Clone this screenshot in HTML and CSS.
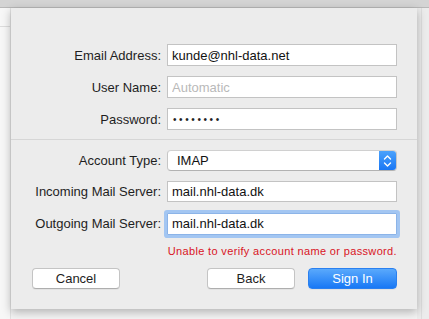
FILE: index.html
```html
<!DOCTYPE html>
<html lang="en">
<head>
    <meta charset="UTF-8">
    <meta name="viewport" content="width=device-width, initial-scale=1.0">
    <title>Add Mail Account</title>
    <link rel="stylesheet" href="styles.css">
</head>
<body>
    <div class="window">
        <div class="titlebar"></div>
        <div class="content">
            <div class="sidebar"><div class="sidebar-line"></div></div>
            <div class="sheet">
                <form class="account-form">
                    <div class="section section-top">
                        <label class="label" for="email">Email Address:</label>
                        <input class="field" type="text" id="email" value="kunde@nhl-data.net">
                        <label class="label" for="user">User Name:</label>
                        <input class="field" type="text" id="user" placeholder="Automatic">
                        <label class="label" for="password">Password:</label>
                        <div class="field password" id="password">&bull;&bull;&bull;&bull;&bull;&bull;&bull;&bull;</div>
                    </div>
                    <div class="divider"></div>
                    <div class="section section-server">
                        <span class="label">Account Type:</span>
                        <div class="popup">
                            <span class="popup-value">IMAP</span>
                            <span class="stepper">
                                <svg width="9" height="14" viewBox="0 0 9 14">
                                    <path d="M1.5 5 L4.5 2 L7.5 5 M1.5 9 L4.5 12 L7.5 9" fill="none" stroke="#fff" stroke-width="1.4" stroke-linecap="round" stroke-linejoin="round"/>
                                </svg>
                            </span>
                        </div>
                        <label class="label" for="incoming">Incoming Mail Server:</label>
                        <input class="field" type="text" id="incoming" value="mail.nhl-data.dk">
                        <label class="label" for="outgoing">Outgoing Mail Server:</label>
                        <input class="field focused" type="text" id="outgoing" value="mail.nhl-data.dk">
                    </div>
                    <p class="error">Unable to verify account name or password.</p>
                    <div class="actions">
                        <button type="button" class="btn">Cancel</button>
                        <div class="spacer"></div>
                        <button type="button" class="btn">Back</button>
                        <button type="submit" class="btn btn-primary">Sign In</button>
                    </div>
                </form>
            </div>
            <div class="aside"><div class="aside-line"></div></div>
        </div>
    </div>
</body>
</html>
```

FILE: styles.css
```css
body {
    margin: 0;
    font-family: 'Liberation Sans', Arial, sans-serif;
    font-size: 13px;
    color: #222;
    background: #f4f4f4;
}
.window {
    width: 429px;
    height: 319px;
    overflow: hidden;
    display: flex;
    flex-direction: column;
}
.titlebar {
    height: 7px;
    background: #d4d4d4;
    border-bottom: 1px solid #b8b8b8;
}
.content {
    flex: 1;
    display: flex;
}
.sidebar {
    width: 11px;
    background: #f7f7f7;
    border-right: 1px solid #e2e2e2;
    box-sizing: border-box;
}
.sidebar-line {
    margin-top: 18px;
    height: 1px;
    background: #dcdcdc;
}
.aside {
    flex: 1;
    background: #ececec;
    display: flex;
}
.aside-line {
    margin-left: 4px;
    width: 1px;
    background: #dedede;
}
.sheet {
    width: 406px;
    height: 301px;
    background: #ececec;
    box-shadow: 0 3px 9px rgba(0, 0, 0, 0.28);
    position: relative;
    z-index: 1;
}
.account-form {
    margin: 0;
}
.section {
    display: grid;
    grid-template-columns: 140px 230px;
    column-gap: 6px;
    align-items: center;
    padding-left: 10px;
}
.section-top {
    padding-top: 36px;
    padding-bottom: 9px;
    grid-template-rows: 22px 22px 22px;
    row-gap: 10px;
}
.section-server {
    padding-top: 10px;
    grid-template-rows: 21px 21px 22px;
    row-gap: 10px;
}
.section-server .focused {
    margin-top: 1px;
}
.label {
    text-align: right;
    color: #1e1e1e;
    white-space: nowrap;
}
.divider {
    height: 1px;
    background: #d6d6d6;
}
.field {
    box-sizing: border-box;
    width: 230px;
    height: 100%;
    margin: 0;
    padding: 0 4px;
    border: 1px solid #c3c3c3;
    background: #fff;
    font-family: 'Liberation Sans', Arial, sans-serif;
    font-size: 13px;
    color: #111;
    outline: none;
}
.field::placeholder {
    color: #b9b9b9;
}
.password {
    display: flex;
    align-items: center;
    padding-left: 5px;
    letter-spacing: 2.6px;
    font-size: 10px;
    color: #222;
}
.focused {
    border-color: #8cb4e8;
    box-shadow: 0 0 0 3px #a3c6f2;
    border-radius: 1px;
}
.popup {
    box-sizing: border-box;
    width: 230px;
    height: 100%;
    display: flex;
    align-items: center;
    background: #fff;
    border: 1px solid #c6c6c6;
    border-top-color: #d0d0d0;
    border-bottom-color: #b2b2b2;
    border-radius: 4px;
    overflow: hidden;
}
.popup-value {
    flex: 1;
    padding-left: 9px;
    color: #111;
}
.stepper {
    width: 17px;
    height: 100%;
    display: flex;
    align-items: center;
    justify-content: center;
    background: linear-gradient(#4ba2fc, #1a77f4);
}
.error {
    margin: 11px 20px 0 0;
    text-align: right;
    font-size: 11px;
    line-height: 13px;
    letter-spacing: 0.35px;
    color: #d9141f;
}
.actions {
    display: flex;
    gap: 13px;
    margin-top: 10px;
    padding: 0 20px 0 21px;
}
.spacer {
    flex: 1;
}
.btn {
    width: 88px;
    height: 21px;
    padding: 0;
    border: 1px solid #c4c4c4;
    border-bottom-color: #aeaeae;
    border-radius: 4px;
    background: #fff;
    font-family: 'Liberation Sans', Arial, sans-serif;
    font-size: 13px;
    color: #1e1e1e;
    box-shadow: 0 1px 0 rgba(0, 0, 0, 0.04);
}
.btn-primary {
    width: 89px;
    border-color: #2a80f0;
    background: linear-gradient(#5aa9fc, #1878f5);
    color: #fff;
}
```
